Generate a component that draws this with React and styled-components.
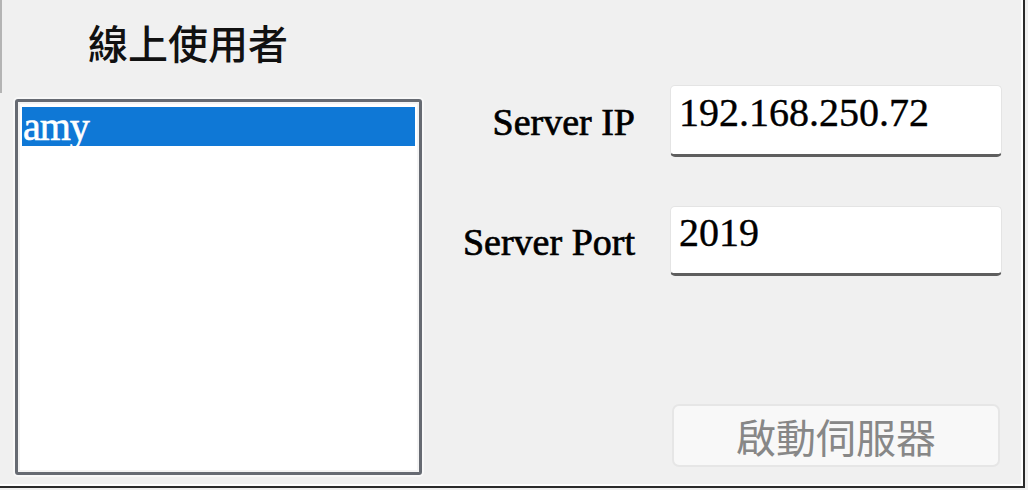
import React, { useState } from "react";
import styled, { createGlobalStyle } from "styled-components";

const GlobalStyle = createGlobalStyle`
  html, body {
    margin: 0;
    padding: 0;
    background: #f0f0f0;
    overflow: hidden;
  }
`;

const Window = styled.div`
  width: 1028px;
  height: 490px;
  box-sizing: border-box;
  background: #f0f0f0;
  position: relative;
  display: grid;
  grid-template-columns: 407px 1fr;
  column-gap: 36px;
  padding: 18px 0 0 15px;
  font-family: "Liberation Serif", "Times New Roman", serif;
  color: #000;
  &::before {
    content: "";
    position: absolute;
    left: 0;
    top: 0;
    width: 2px;
    height: 93px;
    background: #b4b4b4;
  }
  &::after {
    content: "";
    position: absolute;
    right: 3px;
    bottom: 2px;
    width: 1025px;
    height: 487px;
    border-right: 2px solid #2b2b2b;
    border-bottom: 2px solid #2b2b2b;
    box-shadow: inset -4px -4px 0 -2px #ffffff;
    pointer-events: none;
  }
`;

const LeftColumn = styled.div`
  display: flex;
  flex-direction: column;
`;

const Title = styled.div`
  font-family: "Noto Sans CJK TC", "Noto Sans CJK SC", sans-serif;
  font-size: 40px;
  font-weight: 500;
  line-height: 48px;
  margin-left: 73px;
  margin-bottom: 33px;
  color: #111;
`;

const ListBox = styled.div`
  width: 407px;
  height: 376px;
  box-sizing: border-box;
  background: #fff;
  border: 3px solid #666a72;
  border-radius: 3px;
  padding: 5px 4px;
  box-shadow: 0 0 0 2px #f8f8f8, inset 0 0 0 2px #f4f4f4;
`;

const ListItem = styled.div`
  height: 39px;
  line-height: 39px;
  padding-left: 1px;
  font-size: 40px;
  letter-spacing: -1px;
  -webkit-text-stroke: 0.6px currentColor;
  color: ${(p) => (p.$selected ? "#fff" : "#000")};
  background: ${(p) => (p.$selected ? "#0f78d6" : "transparent")};
  cursor: default;
`;

const RightColumn = styled.div`
  display: grid;
  grid-template-columns: 178px 332px;
  grid-template-rows: 72px 70px 1fr;
  column-gap: 34px;
  row-gap: 49px;
  margin-top: 67px;
  align-content: start;
`;

const Label = styled.label`
  font-size: 38px;
  justify-self: end;
  align-self: center;
  white-space: nowrap;
  margin-top: 2px;
  margin-right: 1px;
  -webkit-text-stroke: 0.7px #000;
`;

const Field = styled.input`
  box-sizing: border-box;
  width: 332px;
  height: ${(p) => p.$h}px;
  border: 1px solid #e4e4e4;
  border-bottom: 3px solid #5e5e5e;
  border-radius: 5px;
  background: #fff;
  font-family: "Liberation Serif", "Times New Roman", serif;
  font-size: 40px;
  padding: 0 8px 16px;
  color: #000;
  outline: none;
  -webkit-text-stroke: 0.4px #000;
`;

const Button = styled.button`
  grid-column: 2;
  align-self: start;
  margin-top: 79px;
  width: 328px;
  height: 63px;
  margin-left: 2px;
  box-sizing: border-box;
  border: 2px solid #e6e6e6;
  border-radius: 7px;
  background: #f8f8f8;
  color: #878787;
  font-family: "Noto Sans CJK TC", "Noto Sans CJK SC", sans-serif;
  font-size: 40px;
  line-height: 1;
  padding: 0;
`;

export default function App() {
  const [ip, setIp] = useState("192.168.250.72");
  const [port, setPort] = useState("2019");

  return (
    <>
      <GlobalStyle />
      <Window>
        <LeftColumn>
          <Title>線上使用者</Title>
          <ListBox>
            <ListItem $selected>amy</ListItem>
          </ListBox>
        </LeftColumn>
        <RightColumn>
          <Label>Server IP</Label>
          <Field $h={72} value={ip} onChange={(e) => setIp(e.target.value)} />
          <Label>Server Port</Label>
          <Field $h={70} value={port} onChange={(e) => setPort(e.target.value)} />
          <Button disabled>啟動伺服器</Button>
        </RightColumn>
      </Window>
    </>
  );
}
